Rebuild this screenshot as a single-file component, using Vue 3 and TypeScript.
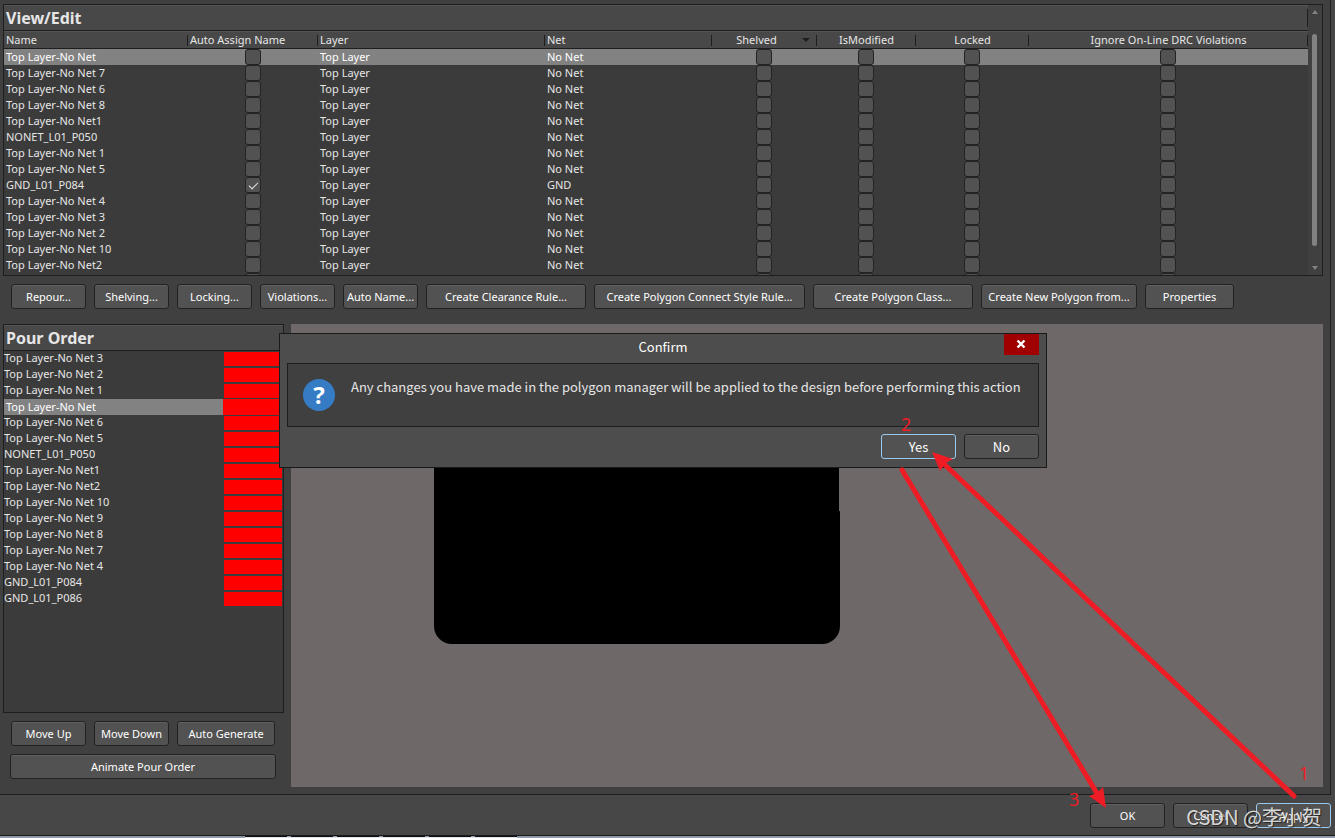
<script setup lang="ts">
import { ref } from 'vue'

interface Polygon {
  name: string
  net: string
  auto: boolean
}

const polygons = ref<Polygon[]>(
  [
    'Top Layer-No Net', 'Top Layer-No Net 7', 'Top Layer-No Net 6', 'Top Layer-No Net 8',
    'Top Layer-No Net1', 'NONET_L01_P050', 'Top Layer-No Net 1', 'Top Layer-No Net 5',
    'GND_L01_P084', 'Top Layer-No Net 4', 'Top Layer-No Net 3', 'Top Layer-No Net 2',
    'Top Layer-No Net 10', 'Top Layer-No Net2', '',
  ].map((name) => ({
    name,
    net: name.startsWith('GND') ? 'GND' : 'No Net',
    auto: name === 'GND_L01_P084',
  })),
)
const flags = ['Shelved', 'IsModified', 'Locked', 'Ignore On-Line DRC Violations']

const pourOrder = [
  'Top Layer-No Net 3', 'Top Layer-No Net 2', 'Top Layer-No Net 1', 'Top Layer-No Net',
  'Top Layer-No Net 6', 'Top Layer-No Net 5', 'NONET_L01_P050', 'Top Layer-No Net1',
  'Top Layer-No Net2', 'Top Layer-No Net 10', 'Top Layer-No Net 9', 'Top Layer-No Net 8',
  'Top Layer-No Net 7', 'Top Layer-No Net 4', 'GND_L01_P084', 'GND_L01_P086',
]
const selectedPour = ref(3)

const actions = [
  { label: 'Repour...', size: 'std' },
  { label: 'Shelving...', size: 'std' },
  { label: 'Locking...', size: 'std' },
  { label: 'Violations...', size: 'std' },
  { label: 'Auto Name...', size: 'std' },
  { label: 'Create Clearance Rule...', size: 'wide' },
  { label: 'Create Polygon Connect Style Rule...', size: 'widest' },
  { label: 'Create Polygon Class...', size: 'wide' },
  { label: 'Create New Polygon from...', size: 'new' },
  { label: 'Properties', size: 'props' },
]
</script>

<template>
  <div class="window">
    <main class="body">
      <section class="panel view">
        <div class="view-main">
          <h2 class="title ruled">View/Edit</h2>
          <div class="grid">
            <table>
              <colgroup>
                <col class="c-name" /><col class="c-auto" /><col class="c-layer" /><col class="c-net" />
                <col class="c-shelved" /><col class="c-mod" /><col class="c-locked" /><col />
              </colgroup>
              <thead>
                <tr>
                  <th>Name</th>
                  <th>Auto Assign Name</th>
                  <th>Layer</th>
                  <th>Net</th>
                  <th class="mid sorted">Shelved<i class="sort"></i></th>
                  <th class="mid">IsModified</th>
                  <th class="mid">Locked</th>
                  <th class="mid">Ignore On-Line DRC Violations</th>
                </tr>
              </thead>
              <tbody>
                <tr v-for="(p, i) in polygons" :key="i" :class="{ selected: i === 0 }">
                  <td>{{ p.name }}</td>
                  <td class="mid"><input v-model="p.auto" type="checkbox" :aria-label="`Auto Assign Name ${p.name}`" /></td>
                  <td>{{ p.name && 'Top Layer' }}</td>
                  <td>{{ p.name && p.net }}</td>
                  <td v-for="f in flags" :key="f" class="mid flag"><input type="checkbox" :aria-label="`${f} ${p.name}`" /></td>
                </tr>
              </tbody>
            </table>
          </div>
        </div>
        <div class="scrollbar">
          <i class="arrow up"></i>
          <i class="thumb"></i>
          <i class="arrow down"></i>
        </div>
      </section>

      <div class="actions">
        <button v-for="a in actions" :key="a.label" type="button" class="btn" :class="a.size">{{ a.label }}</button>
      </div>

      <div class="lower">
        <aside class="side">
          <section class="panel pour">
            <h2 class="title">Pour Order</h2>
            <ul>
              <li v-for="(n, i) in pourOrder" :key="n" :class="{ selected: i === selectedPour }" @click="selectedPour = i">
                <span>{{ n }}</span><i class="swatch"></i>
              </li>
            </ul>
          </section>
          <div class="pour-buttons">
            <button type="button" class="btn std">Move Up</button>
            <button type="button" class="btn std">Move Down</button>
            <button type="button" class="btn grow">Auto Generate</button>
          </div>
          <button type="button" class="btn animate">Animate Pour Order</button>
        </aside>
        <div class="canvas">
          <svg class="board" width="406" height="244" viewBox="0 0 406 244" aria-hidden="true">
            <path d="M0 0H405V111H406V226A18 18 0 0 1 388 244H18A18 18 0 0 1 0 226Z" fill="#000" />
          </svg>
        </div>
      </div>
    </main>

    <footer class="footer">
      <button type="button" class="btn std">OK</button>
      <button type="button" class="btn std">Cancel</button>
      <button type="button" class="btn std focus">Apply</button>
    </footer>
    <div class="edge"><i class="dashes"></i></div>

    <div class="dialog" role="dialog" aria-labelledby="dlg-title">
      <header>
        <span id="dlg-title">Confirm</span>
        <button type="button" class="close" aria-label="Close">
          <svg width="10" height="10" viewBox="0 0 10 10"><path d="M1.5 1.5 8.5 8.5M8.5 1.5 1.5 8.5" stroke="#fff" stroke-width="2.4" /></svg>
        </button>
      </header>
      <div class="message">
        <span class="question">?</span>
        <p>Any changes you have made in the polygon manager will be applied to the design before performing this action</p>
      </div>
      <div class="choices">
        <button type="button" class="btn std focus">Yes</button>
        <button type="button" class="btn std">No</button>
      </div>
    </div>

    <svg class="marks" width="1335" height="838" viewBox="0 0 1335 838" aria-hidden="true">
      <g stroke="#ee1c24" stroke-width="5" stroke-linecap="round">
        <path d="M1294 796 943 463" />
        <path d="M902 470 1098 795" />
      </g>
      <g fill="#ee1c24">
        <path d="M932 452 953 459 946 463 940 471Z" />
        <path d="M1106 808 1103 787 1097 793 1089 796Z" />
      </g>
      <g class="digits">
        <text x="901" y="431">2</text>
        <text x="1299" y="780">1</text>
        <text x="1069" y="806">3</text>
      </g>
    </svg>
    <div class="watermark">CSDN @李小贺</div>
  </div>
</template>

<style>
body {
  margin: 0;
  background: #424242;
}
</style>

<style scoped>
.window {
  position: relative;
  display: flex;
  flex-direction: column;
  min-height: 100vh;
  overflow: hidden;
  box-sizing: border-box;
  background: #474747;
  color: #e6e6e6;
  font: 11px/16px "Noto Sans", "Noto Sans CJK SC", sans-serif;
}
.window * {
  box-sizing: border-box;
}
.body {
  flex: 1;
  display: flex;
  flex-direction: column;
  margin-right: 4px;
  padding: 4px 7px 7px 3px;
  border-right: 1px solid #1e1e1e;
  border-bottom: 1px solid #1e1e1e;
  background: #404040;
}
.panel {
  border: 1px solid #1e1e1e;
  background: #3b3b3b;
}
.view {
  display: flex;
  height: 272px;
}
.view-main {
  flex: 1;
  min-width: 0;
  display: flex;
  flex-direction: column;
}
.title {
  position: relative;
  margin: 0;
  height: 26px;
  padding-left: 2px;
  border-top: 1px solid #555;
  border-bottom: 1px solid #1e1e1e;
  background: #484848;
  font-size: 16px;
  font-weight: 700;
  line-height: 24px;
}
.ruled::after {
  content: "";
  position: absolute;
  top: 3px;
  right: 0;
  width: 1px;
  height: 18px;
  background: #1e1e1e;
}
.grid {
  flex: 1;
  overflow: hidden;
}
table {
  width: 100%;
  table-layout: fixed;
  border-collapse: separate;
  border-spacing: 0;
}
.c-name { width: 184px; }
.c-auto { width: 130px; }
.c-layer { width: 227px; }
.c-net { width: 167px; }
.c-shelved { width: 105px; }
.c-mod { width: 99px; }
.c-locked { width: 113px; }
th {
  position: relative;
  height: 18px;
  padding: 0 2px;
  border-top: 1px solid #555;
  border-bottom: 1px solid #1e1e1e;
  background: #484848;
  font-weight: 400;
  line-height: 16px;
  text-align: left;
  white-space: nowrap;
}
th::after {
  content: "";
  position: absolute;
  top: 3px;
  right: 0;
  width: 1px;
  height: 11px;
  background: #1e1e1e;
}
td {
  height: 16px;
  padding: 0 2px;
  line-height: 16px;
  white-space: nowrap;
}
.mid {
  text-align: center;
}
td.flag {
  padding: 0 2px 0 1px;
}
th.sorted {
  padding-right: 18px;
}
.sort {
  position: absolute;
  top: 6px;
  right: 7px;
  border: 4px solid transparent;
  border-top-color: #1e1e1e;
  border-bottom: 0;
}
.selected {
  background: #828282;
  color: #fff;
}
input {
  appearance: none;
  display: block;
  width: 16px;
  height: 16px;
  margin: 0 auto;
  border: 1px solid #232323;
  border-radius: 3px;
  background: #525252;
}
input:checked::after {
  content: "";
  display: block;
  width: 8px;
  height: 4px;
  margin: 4px 0 0 3px;
  border: solid #e6e6e6;
  border-width: 0 0 1px 1px;
  transform: rotate(-45deg);
}
.scrollbar {
  width: 14px;
  display: flex;
  flex-direction: column;
  align-items: center;
  padding: 5px 1px 5px 0;
  background: #404040;
}
.arrow {
  border: 3px solid transparent;
}
.up {
  border-top: 0;
  border-bottom: 4px solid #828282;
}
.down {
  margin-top: auto;
  border-bottom: 0;
  border-top: 4px solid #828282;
}
.thumb {
  width: 5px;
  height: 212px;
  margin-top: 20px;
  border-radius: 3px;
  background: #828282;
}
.btn {
  height: 25px;
  padding: 0;
  border: 1px solid #222;
  border-radius: 3px;
  background: #525252;
  box-shadow: inset 0 1px #606060;
  color: #fff;
  font: inherit;
  white-space: nowrap;
}
.std { width: 75px; }
.wide { width: 160px; }
.widest { width: 211px; }
.new { width: 156px; }
.props { width: 89px; }
.focus {
  border-color: #99c9ef;
  box-shadow: none;
}
.actions {
  display: flex;
  gap: 8px;
  padding: 8px 8px 15px;
}
.lower {
  flex: 1;
  display: flex;
  gap: 7px;
}
.side {
  width: 281px;
  display: flex;
  flex-direction: column;
}
.pour {
  flex: 1;
}
ul {
  margin: 0;
  padding: 0 1px 0 0;
  list-style: none;
}
li {
  display: flex;
  height: 16px;
  line-height: 14px;
}
li span {
  flex: 1;
}
li.selected {
  line-height: 16px;
}
li.selected span {
  padding-left: 2px;
}
.swatch {
  width: 58px;
  height: 14px;
  margin-top: 1px;
  background: #f00;
}
.selected .swatch {
  width: 59px;
  height: 16px;
  margin-top: 0;
}
.pour-buttons {
  display: flex;
  gap: 8px;
  padding: 8px 9px 8px 8px;
}
.grow {
  flex: 1;
}
.animate {
  margin: 0 8px 8px 7px;
}
.canvas {
  flex: 1;
  position: relative;
  background: #6e6968;
}
.board {
  position: absolute;
  left: 143px;
  top: 76px;
}
.footer {
  display: flex;
  justify-content: flex-end;
  gap: 8px;
  padding: 8px 4px 7px;
  border-bottom: 1px solid #1a1a1a;
}
.edge {
  height: 2px;
  padding-left: 245px;
  background: #8f9bab;
}
.dashes {
  display: block;
  width: 272px;
  height: 1px;
  background: repeating-linear-gradient(90deg, #111 0 42px, #8f9bab 42px 46px);
  box-shadow: 0 1px #dfe5ea;
}
.dialog {
  position: absolute;
  left: 279px;
  top: 333px;
  width: 768px;
  padding: 0 7px 8px;
  border: 1px solid #1a1a1a;
  background: #4d4d4d;
  font: 13px/16px "Noto Sans CJK SC", "Noto Sans", sans-serif;
}
.dialog header {
  position: relative;
  height: 29px;
  line-height: 26px;
  text-align: center;
  color: #fff;
}
.close {
  position: absolute;
  top: 0;
  right: 0;
  width: 35px;
  height: 21px;
  display: grid;
  place-items: center;
  padding: 0 1px 1px 0;
  border: 0;
  background: #a00000;
}
.message {
  display: flex;
  height: 64px;
  padding: 15px;
  gap: 16px;
  border: 1px solid #1e1e1e;
  background: #404040;
}
.message p {
  margin: 0;
  line-height: 16px;
  white-space: nowrap;
}
.question {
  flex: none;
  width: 32px;
  height: 32px;
  border-radius: 50%;
  background: #367cc5;
  color: #fff;
  font: 700 24px/32px "Noto Sans", sans-serif;
  text-align: center;
}
.choices {
  display: flex;
  justify-content: flex-end;
  gap: 8px;
  padding-top: 7px;
}
.marks {
  position: absolute;
  left: 0;
  top: 0;
  pointer-events: none;
}
.digits {
  fill: #ee1c24;
  font: 18px "Noto Sans", sans-serif;
}
.watermark {
  position: absolute;
  right: 13px;
  bottom: 7px;
  color: rgba(235, 235, 235, 0.9);
  font: 20px/28px "Noto Sans CJK SC", sans-serif;
  text-shadow: 1px 1px 1px #222;
  pointer-events: none;
}
</style>
